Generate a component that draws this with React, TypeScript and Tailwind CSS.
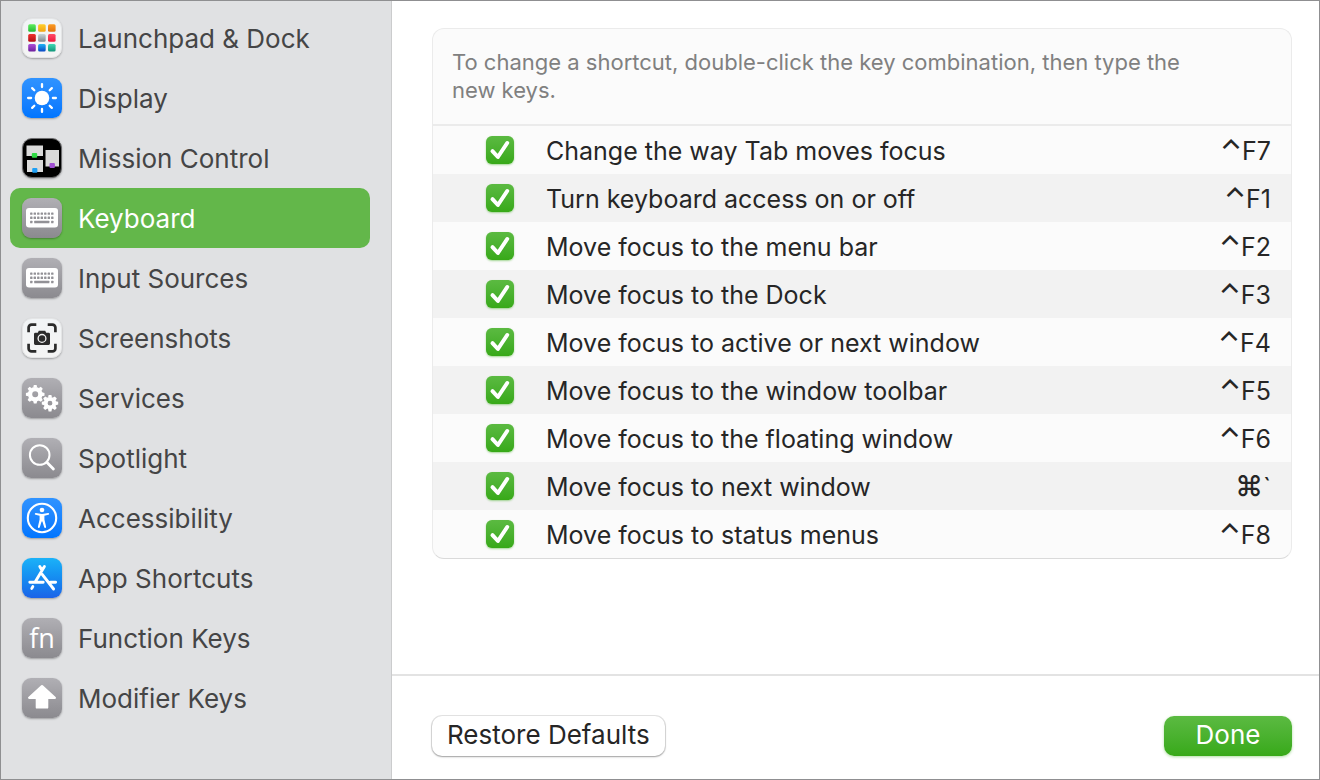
import { useState } from "react";
import type { ReactNode } from "react";

const FONT = "font-['Inter','Liberation_Sans',sans-serif]";

type Tone = "gray" | "blue" | "sky" | "white" | "black";

const TONES: Record<Tone, string> = {
  gray: "size-10 rounded-[9px] bg-linear-to-b from-[#b0afb4] to-[#8b8a8f]",
  blue: "size-10 rounded-[9px] bg-linear-to-b from-[#2f93ff] to-[#0075ff]",
  sky: "size-10 rounded-[9px] bg-linear-to-b from-[#1cb2f8] to-[#1c63e8]",
  white: "size-10 rounded-[10px] border border-[#e4e5e6] bg-linear-to-b from-[#f1f4f6] to-[#f4f4f4]",
  black: "size-10 rounded-[10px] border border-[#6c6c6e] bg-black",
};

function Tile({ tone, children }: { tone: Tone; children: ReactNode }) {
  return (
    <span
      className={`${TONES[tone]} flex shrink-0 items-center justify-center shadow-[0_1px_2px_rgba(0,0,0,0.3)]`}
      aria-hidden="true"
    >
      {children}
    </span>
  );
}

function Glyph({ children }: { children: ReactNode }) {
  return (
    <svg viewBox="0 0 40 40" className="size-10 shrink-0" fill="none">
      {children}
    </svg>
  );
}

const PAD: [string, string, number, number][] = [
  ["#5fee5d", "#22b934", 6.2, 6.2],
  ["#ffcf2b", "#f3a412", 16.1, 6.2],
  ["#fb9d24", "#e2700f", 26, 6.2],
  ["#f0302c", "#b30d14", 6.2, 16.1],
  ["#c6d2d8", "#80898e", 16.1, 16.1],
  ["#ff4a68", "#f0183c", 26, 16.1],
  ["#ac4fd8", "#6c1d9c", 6.2, 26],
  ["#1fb4f5", "#0a45c4", 16.1, 26],
  ["#3fd8b4", "#0f9579", 26, 26],
];

function LaunchpadIcon() {
  return (
    <Tile tone="white">
      <Glyph>
        <defs>
          {PAD.map(([a, b], i) => (
            <linearGradient key={i} id={`pad${i}`} x1="0" y1="0" x2="0" y2="1">
              <stop stopColor={a} />
              <stop offset="1" stopColor={b} />
            </linearGradient>
          ))}
        </defs>
        {PAD.map(([, , x, y], i) => (
          <rect key={i} x={x} y={y} width="7.6" height="7.6" rx="1.5" fill={`url(#pad${i})`} />
        ))}
      </Glyph>
    </Tile>
  );
}

function DisplayIcon() {
  return (
    <Tile tone="blue">
      <Glyph>
        <circle cx="20" cy="20" r="7.3" fill="#fff" />
        {[0, 45, 90, 135, 180, 225, 270, 315].map((a) => (
          <path key={a} d="M20 6.1v3" stroke="#fff" strokeWidth="2.3" strokeLinecap="round" transform={`rotate(${a} 20 20)`} />
        ))}
      </Glyph>
    </Tile>
  );
}

function MissionIcon() {
  return (
    <Tile tone="black">
      <Glyph>
        <rect x="4.5" y="7.5" width="16.5" height="10.5" fill="#dadada" />
        <rect x="5" y="22" width="16" height="12" fill="#dadada" />
        <rect x="23.5" y="12" width="13.5" height="16.5" fill="#dadada" />
        <rect x="9.8" y="15" width="5.4" height="4.8" rx="1" fill="#2fd943" />
        <rect x="10.2" y="30" width="5.2" height="4.8" rx="1" fill="#1ea0f5" />
        <rect x="27.5" y="25" width="5.4" height="5" rx="1" fill="#a04fd3" />
      </Glyph>
    </Tile>
  );
}

const KEY_X = [9.3, 12.8, 16.3, 19.8, 23.3, 26.8, 30.3];

function KeyboardIcon() {
  return (
    <Tile tone="gray">
      <Glyph>
        <rect x="4" y="10" width="32" height="19.6" rx="3" fill="#fff" />
        {[15.6, 19.8].map((y) =>
          KEY_X.map((x) => <rect key={`${x}-${y}`} x={x - 1.2} y={y - 1.2} width="2.4" height="2.4" rx="0.5" fill="#929196" />),
        )}
        <rect x="8.1" y="22.8" width="2.4" height="2.4" rx="0.5" fill="#929196" />
        <rect x="12.2" y="22.8" width="15.2" height="2.4" rx="0.5" fill="#929196" />
        <rect x="29.1" y="22.8" width="2.4" height="2.4" rx="0.5" fill="#929196" />
      </Glyph>
    </Tile>
  );
}

function ScreenshotIcon() {
  return (
    <Tile tone="white">
      <Glyph>
        <path
          d="M6.6 14.3V9.6a3 3 0 0 1 3-3h4.7M25.7 6.6h4.7a3 3 0 0 1 3 3v4.7M33.4 25.7v4.7a3 3 0 0 1-3 3h-4.7M14.3 33.4H9.6a3 3 0 0 1-3-3v-4.7"
          stroke="#2b2b2b"
          strokeWidth="2.7"
        />
        <path d="M12 16.2q0-1.4 1.4-1.4h2.4l1-2h6.4l1 2h2.4q1.4 0 1.4 1.4v9.4q0 1.4-1.4 1.4H13.4Q12 27 12 25.6z" fill="#2b2b2b" />
        <circle cx="20" cy="20.4" r="3.9" stroke="#f4f4f4" strokeWidth="1.3" />
      </Glyph>
    </Tile>
  );
}

function Gear({ cx, cy, r, hole }: { cx: number; cy: number; r: number; hole: number }) {
  const body = r - 2;
  return (
    <g transform={`translate(${cx} ${cy})`}>
      <circle r={(body + hole) / 2} stroke="#fff" strokeWidth={body - hole} />
      {[0, 45, 90, 135, 180, 225, 270, 315].map((a) => (
        <path key={a} d={`M-2 ${-body + 0.6}L-1.4 ${-r}H1.4L2 ${-body + 0.6}z`} fill="#fff" transform={`rotate(${a})`} />
      ))}
    </g>
  );
}

function ServicesIcon() {
  return (
    <Tile tone="gray">
      <Glyph>
        <Gear cx={13.2} cy={16.3} r={9.3} hole={3} />
        <Gear cx={28} cy={25.2} r={8.2} hole={2.4} />
      </Glyph>
    </Tile>
  );
}

function SpotlightIcon() {
  return (
    <Tile tone="gray">
      <Glyph>
        <circle cx="17.7" cy="17" r="9.8" stroke="#fff" strokeWidth="2" />
        <path d="M24.8 24.2l6.6 6.8" stroke="#fff" strokeWidth="2.8" strokeLinecap="round" />
      </Glyph>
    </Tile>
  );
}

function AccessibilityIcon() {
  return (
    <Tile tone="blue">
      <Glyph>
        <circle cx="20" cy="20" r="14.2" stroke="#fff" strokeWidth="2.1" />
        <circle cx="20" cy="12" r="2.3" fill="#fff" />
        <path
          d="M13.9 15l4.3.8q1.8.3 3.6 0l4.3-.8q1.1 0 1.1 1 0 .6-.8.8l-4 1v3.7l1.7 7.3q.1 1.2-1 1.2-.6 0-.9-.8L20.4 23.6h-.8L17.8 29.2q-.3.8-.9.8-1.1 0-1-1.2l1.7-7.3v-3.7l-4-1q-.8-.2-.8-.8 0-1 1.1-1z"
          fill="#fff"
        />
      </Glyph>
    </Tile>
  );
}

function AppStoreIcon() {
  return (
    <Tile tone="sky">
      <Glyph>
        <path
          d="M22.4 8.6L13 24.2M17.8 8.6l2 3.3M20 16.2l11.6 14.8M7.8 24.3h13.4M28.6 24.3h5M10.8 28.6l-1 1.8"
          stroke="#fff"
          strokeWidth="2.9"
          strokeLinecap="round"
        />
      </Glyph>
    </Tile>
  );
}

function FunctionIcon() {
  return (
    <Tile tone="gray">
      <span className="font-['Open_Sans','Inter',sans-serif] text-[27px] leading-9 text-white">fn</span>
    </Tile>
  );
}

function ModifierIcon() {
  return (
    <Tile tone="gray">
      <Glyph>
        <path
          d="M20 8.2L7.2 19.8H14.9V29.4H25.1V19.8H32.8z"
          fill="#fff"
          stroke="#fff"
          strokeWidth="2.4"
          strokeLinejoin="round"
        />
      </Glyph>
    </Tile>
  );
}

const CATEGORIES: { name: string; Icon: () => ReactNode }[] = [
  { name: "Launchpad & Dock", Icon: LaunchpadIcon },
  { name: "Display", Icon: DisplayIcon },
  { name: "Mission Control", Icon: MissionIcon },
  { name: "Keyboard", Icon: KeyboardIcon },
  { name: "Input Sources", Icon: KeyboardIcon },
  { name: "Screenshots", Icon: ScreenshotIcon },
  { name: "Services", Icon: ServicesIcon },
  { name: "Spotlight", Icon: SpotlightIcon },
  { name: "Accessibility", Icon: AccessibilityIcon },
  { name: "App Shortcuts", Icon: AppStoreIcon },
  { name: "Function Keys", Icon: FunctionIcon },
  { name: "Modifier Keys", Icon: ModifierIcon },
];

const SHORTCUTS: [string, string, string][] = [
  ["Change the way Tab moves focus", "⌃", "F7"],
  ["Turn keyboard access on or off", "⌃", "F1"],
  ["Move focus to the menu bar", "⌃", "F2"],
  ["Move focus to the Dock", "⌃", "F3"],
  ["Move focus to active or next window", "⌃", "F4"],
  ["Move focus to the window toolbar", "⌃", "F5"],
  ["Move focus to the floating window", "⌃", "F6"],
  ["Move focus to next window", "⌘", "`"],
  ["Move focus to status menus", "⌃", "F8"],
];

function Checkbox({ id }: { id: string }) {
  return (
    <span className="grid size-7">
      <input
        id={id}
        type="checkbox"
        defaultChecked
        className="peer size-7 appearance-none rounded-md border border-[#c8c8c8] bg-white [grid-area:1/1] checked:border-0 checked:bg-linear-to-b checked:from-[#5bba41] checked:to-[#37a917] checked:shadow-[0_1px_2px_rgba(55,169,23,0.45)]"
      />
      <svg
        viewBox="0 0 28 28"
        fill="none"
        aria-hidden="true"
        className="pointer-events-none size-7 opacity-0 [grid-area:1/1] peer-checked:opacity-100"
      >
        <path d="M6.5 15.2l5.4 5.8L21.2 7" stroke="#fff" strokeWidth="4" strokeLinecap="round" strokeLinejoin="round" />
      </svg>
    </span>
  );
}

export default function App() {
  const [selected, setSelected] = useState("Keyboard");

  return (
    <div className={`${FONT} flex min-h-screen border border-[#8f8f91] bg-white text-[26px] leading-8 text-[#262626]`}>
      <nav
        aria-label="Shortcut categories"
        className="flex w-[391px] shrink-0 flex-col border-r border-[#cbcccd] bg-[#e0e1e3] pt-[7px] pr-[21px] pl-[9px]"
      >
        {CATEGORIES.map(({ name, Icon }) => (
          <button
            key={name}
            type="button"
            aria-current={name === selected ? "true" : undefined}
            onClick={() => setSelected(name)}
            className={`flex h-15 items-center gap-4 rounded-[10px] px-3 text-left ${
              name === selected ? "bg-[#63b74a] text-white" : "text-[#454546]"
            }`}
          >
            <Icon />
            <span className="pt-0.5">{name}</span>
          </button>
        ))}
      </nav>

      <main className="flex min-w-0 flex-1 flex-col">
        <div className="flex-1 pt-[27px] pr-[27px] pb-10 pl-10">
          <section className="overflow-hidden rounded-xl border border-[#ebebeb] border-b-[#dadada] bg-[#fbfbfb]">
            <p className="border-b-2 border-[#ebebeb] pt-[19px] pr-20 pb-5 pl-[19px] text-[22px] leading-7 text-[#808080]">
              To change a shortcut, double-click the key combination, then type the new keys.
            </p>
            <table className="w-full text-[25px]">
              <tbody>
                {SHORTCUTS.map(([name, modifier, key], i) => (
                  <tr key={name} className="h-12 even:bg-[#f2f2f2]">
                    <td className="w-[113px] pl-[53px]">
                      <Checkbox id={`shortcut-${i}`} />
                    </td>
                    <td className="pt-0.5">
                      <label htmlFor={`shortcut-${i}`}>{name}</label>
                    </td>
                    <td className="pr-5 text-right whitespace-nowrap">
                      <span className="text-[28px] font-medium">{modifier}</span>
                      {key}
                    </td>
                  </tr>
                ))}
              </tbody>
            </table>
          </section>
        </div>

        <footer className="flex items-center justify-between border-t-2 border-[#e3e3e3] pt-10 pr-[27px] pb-[23px] pl-10">
          <button
            type="button"
            className="h-10 rounded-[10px] bg-white px-[15px] pb-0.5 shadow-[0_0_0_1px_rgba(0,0,0,0.1),0_1px_2px_rgba(0,0,0,0.3)]"
          >
            Restore Defaults
          </button>
          <button
            type="button"
            className="h-10 w-32 rounded-[10px] bg-linear-to-b from-[#5bba41] to-[#37a917] pb-0.5 text-white shadow-[0_1px_3px_rgba(55,169,23,0.4)]"
          >
            Done
          </button>
        </footer>
      </main>
    </div>
  );
}
